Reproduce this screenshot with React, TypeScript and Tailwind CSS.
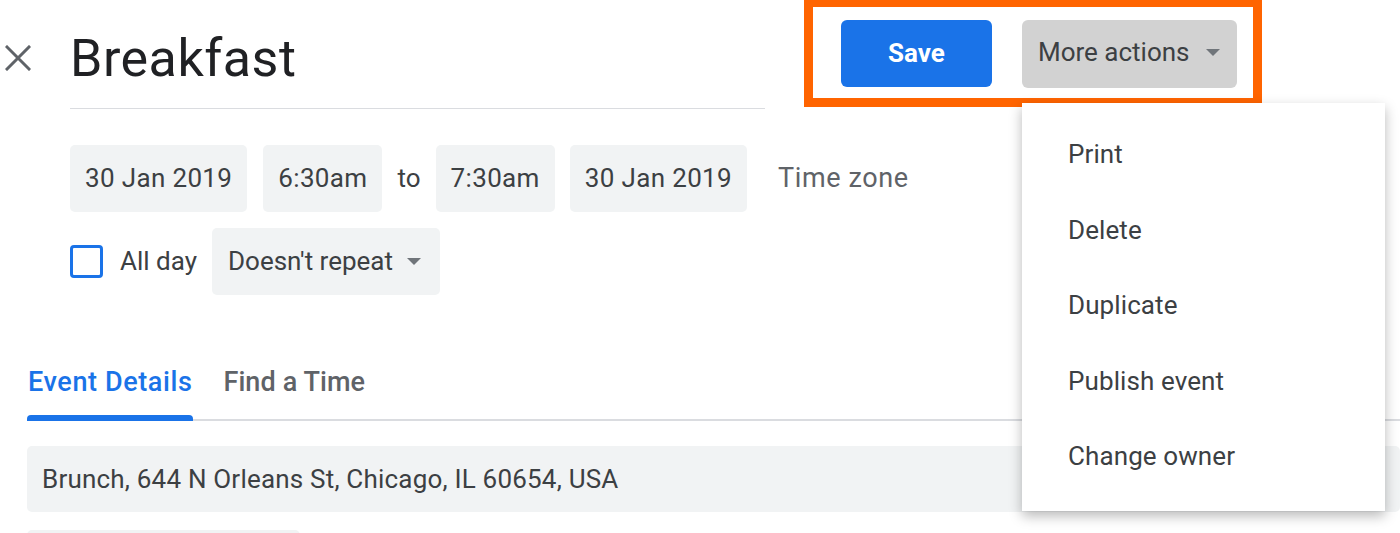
const menuItems = ['Print', 'Delete', 'Duplicate', 'Publish event', 'Change owner'];

function CloseIcon() {
  return (
    <svg width="26" height="26" viewBox="0 0 26 26" aria-hidden>
      <path d="M2 2 L24 24 M24 2 L2 24" stroke="#5f6368" strokeWidth="3" strokeLinecap="square" />
    </svg>
  );
}

function Caret() {
  return (
    <svg width="14" height="7" viewBox="0 0 14 7" aria-hidden>
      <path d="M0 0 L14 0 L7 7 Z" fill="#70757a" />
    </svg>
  );
}

function Chip({ children }: { children: React.ReactNode }) {
  return (
    <div className="h-[67px] px-[15px] flex items-center bg-[#f1f3f4] rounded-[5px] text-[26px] tracking-[0.35px] text-[#3c4043] whitespace-nowrap">
      {children}
    </div>
  );
}

export default function App() {
  return (
    <div className="relative w-[1400px] h-[533px] overflow-hidden bg-white font-['Roboto',sans-serif]">
      {/* header */}
      <div className="flex items-start">
        <div className="w-[70px] pl-[5px] pt-[45px]">
          <CloseIcon />
        </div>
        <div className="w-[695px] h-[109px] border-b border-[#dadce0] flex items-center pt-[10px]">
          <span className="text-[52px] leading-none text-[#202124] tracking-[0.5px]">Breakfast</span>
        </div>
        <div className="ml-[39px] mt-[-2px] border-[9px] border-[#ff6400] pt-[13px] pb-[10px] pl-[28px] pr-[16px] flex gap-[30px]">
          <button
            type="button"
            className="w-[151px] h-[67px] rounded-[6px] bg-[#1a73e8] text-white text-[26px] font-bold"
          >
            Save
          </button>
          <button
            type="button"
            className="w-[215px] h-[68px] rounded-[6px] bg-[#d2d2d2] text-[#3c4043] text-[26px] flex items-center pl-[16px] pb-[3px] gap-[16px]"
          >
            More actions
            <Caret />
          </button>
        </div>
      </div>

      {/* date row */}
      <div className="ml-[70px] mt-[36px] flex items-center">
        <Chip>30 Jan 2019</Chip>
        <div className="w-[16px]" />
        <Chip>6:30am</Chip>
        <span className="mx-[15px] text-[26px] text-[#3c4043]">to</span>
        <Chip>7:30am</Chip>
        <div className="w-[15px]" />
        <Chip>30 Jan 2019</Chip>
        <span className="ml-[31px] text-[27px] tracking-[0.6px] text-[#5f6368]">Time zone</span>
      </div>

      {/* all day row */}
      <div className="ml-[70px] mt-[16px] flex items-center">
        <div className="w-[33px] h-[33px] border-[3px] border-[#1a73e8] rounded-[4px]" />
        <span className="ml-[17px] text-[26px] text-[#3c4043]">All day</span>
        <div className="ml-[15px] w-[228px] h-[67px] pl-[16px] flex items-center gap-[14px] bg-[#f1f3f4] rounded-[5px] text-[26px] text-[#3c4043]">
          Doesn't repeat
          <Caret />
        </div>
      </div>

      {/* tabs */}
      <div className="ml-[27px] mt-[46px] flex gap-[30px] border-b-2 border-[#dadce0]">
        <div className="flex flex-col items-stretch pt-[26px] -mb-[2px]">
          <span className="px-px text-[27px] leading-[31px] font-medium tracking-[0.6px] text-[#1a73e8] whitespace-nowrap">Event Details</span>
          <div className="mt-[17px] h-[6px] rounded-t-[4px] bg-[#1a73e8]" />
        </div>
        <div className="flex flex-col items-stretch pt-[26px] -mb-[2px]">
          <span className="text-[27px] leading-[31px] font-medium tracking-[0.1px] text-[#5f6368] whitespace-nowrap">Find a Time</span>
          <div className="mt-[17px] h-[6px]" />
        </div>
      </div>

      {/* location */}
      <div className="ml-[27px] mt-[25px] h-[66px] pl-[15px] flex items-center bg-[#f1f3f4] rounded-[5px] text-[26px] tracking-[0.2px] text-[#3c4043]">
        Brunch, 644 N Orleans St, Chicago, IL 60654, USA
      </div>
      <div className="ml-[27px] mt-[18px] w-[273px] h-[40px] bg-[#f1f3f4] rounded-[5px]" />

      {/* more actions menu */}
      <div className="absolute left-[1022px] top-[103px] w-[363px] bg-white pt-[14px] pb-[16px] shadow-[0_5px_12px_rgba(0,0,0,0.28)]">
        {menuItems.map((item) => (
          <div key={item} className="h-[75.5px] pl-[46px] flex items-center text-[26px] tracking-[0.1px] text-[#3c4043]">
            {item}
          </div>
        ))}
      </div>
    </div>
  );
}
